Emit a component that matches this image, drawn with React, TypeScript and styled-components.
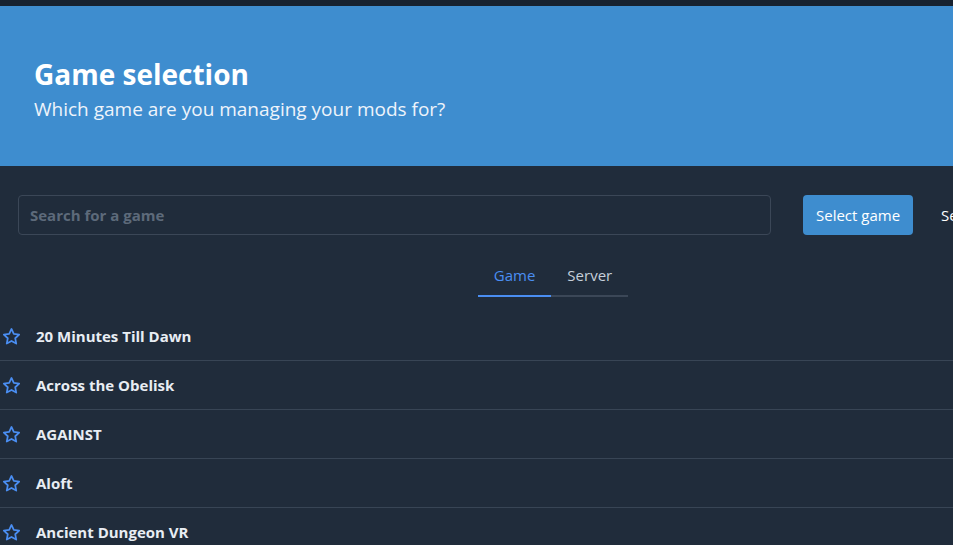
import React from "react";
import styled, { createGlobalStyle } from "styled-components";

const Global = createGlobalStyle`
  html, body { margin: 0; padding: 0; background: #202c3b; overflow: hidden; }
  body { font-family: "Open Sans", "Noto Sans", sans-serif; color: #e6ecf2; }
`;

const Page = styled.div`
  width: 953px;
  height: 545px;
  overflow: hidden;
  background: #202c3b;
`;

const TopBar = styled.div`
  height: 6px;
  background: #172230;
`;

const Hero = styled.header`
  height: 160px;
  background: #3e8dcf;
  padding: 5px 34px 0;
  display: flex;
  flex-direction: column;
  justify-content: center;
  box-sizing: border-box;
`;

const Title = styled.h1`
  margin: 0;
  font-size: 28px;
  font-weight: 700;
  color: #ffffff;
  line-height: 36px;
`;

const Subtitle = styled.p`
  margin: 4px 0 0;
  font-size: 19px;
  color: #eef4fb;
  line-height: 26px;
`;

const Content = styled.main`
  width: 1106px;
`;

const SearchRow = styled.div`
  display: flex;
  align-items: center;
  padding: 29px 0 0 18px;
  gap: 32px;
`;

const SearchInput = styled.input`
  width: 753px;
  height: 40px;
  box-sizing: border-box;
  background: transparent;
  border: 1px solid #3b4757;
  border-radius: 4px;
  padding: 0 11px;
  font-family: "Open Sans", "Noto Sans", sans-serif;
  font-size: 15px;
  font-weight: 700;
  color: #e6ecf2;
  outline: none;
  &::placeholder { color: #5d6a7a; }
`;

const Button = styled.button<{ $primary?: boolean }>`
  height: 40px;
  padding: 0 ${(p) => (p.$primary ? "13px" : "0")};
  border: none;
  border-radius: 4px;
  background: ${(p) => (p.$primary ? "#3e8dcf" : "transparent")};
  color: #ffffff;
  font-family: "Open Sans", "Noto Sans", sans-serif;
  font-size: 15px;
  white-space: nowrap;
  margin-right: ${(p) => (p.$primary ? "-4px" : "0")};
`;

const Tabs = styled.nav`
  display: flex;
  justify-content: center;
  margin-top: 21px;
`;

const Tab = styled.div<{ $active?: boolean }>`
  padding: 8px 16px 9px;
  font-size: 15px;
  line-height: 22px;
  color: ${(p) => (p.$active ? "#4a8ef2" : "#c6cfda")};
  border-bottom: 2px solid ${(p) => (p.$active ? "#4a8ef2" : "#3b4757")};
`;

const List = styled.ul`
  list-style: none;
  margin: 15px 0 0;
  padding: 0;
`;

const Row = styled.li`
  display: flex;
  align-items: center;
  height: 48px;
  gap: 15px;
  padding-left: 2px;
  border-bottom: 1px solid #384555;
  font-size: 15px;
  font-weight: 700;
  color: #e8edf3;
`;

const StarIcon = () => (
  <svg width="19" height="19" viewBox="0 0 24 24" fill="none" stroke="#4a8ef2" strokeWidth="2.2" strokeLinejoin="round">
    <path d="M12 2.5l2.9 6.2 6.8.8-5 4.7 1.3 6.7L12 17.6l-6 3.3 1.3-6.7-5-4.7 6.8-.8z" />
  </svg>
);

const games = ["20 Minutes Till Dawn", "Across the Obelisk", "AGAINST", "Aloft", "Ancient Dungeon VR", "Aska"];

export default function App() {
  return (
    <Page>
      <Global />
      <TopBar />
      <Hero>
        <Title>Game selection</Title>
        <Subtitle>Which game are you managing your mods for?</Subtitle>
      </Hero>
      <Content>
        <SearchRow>
          <SearchInput placeholder="Search for a game" />
          <Button $primary>Select game</Button>
          <Button>Set as default</Button>
        </SearchRow>
        <Tabs>
          <Tab $active>Game</Tab>
          <Tab>Server</Tab>
        </Tabs>
        <List>
          {games.map((g) => (
            <Row key={g}>
              <StarIcon />
              <span>{g}</span>
            </Row>
          ))}
        </List>
      </Content>
    </Page>
  );
}
